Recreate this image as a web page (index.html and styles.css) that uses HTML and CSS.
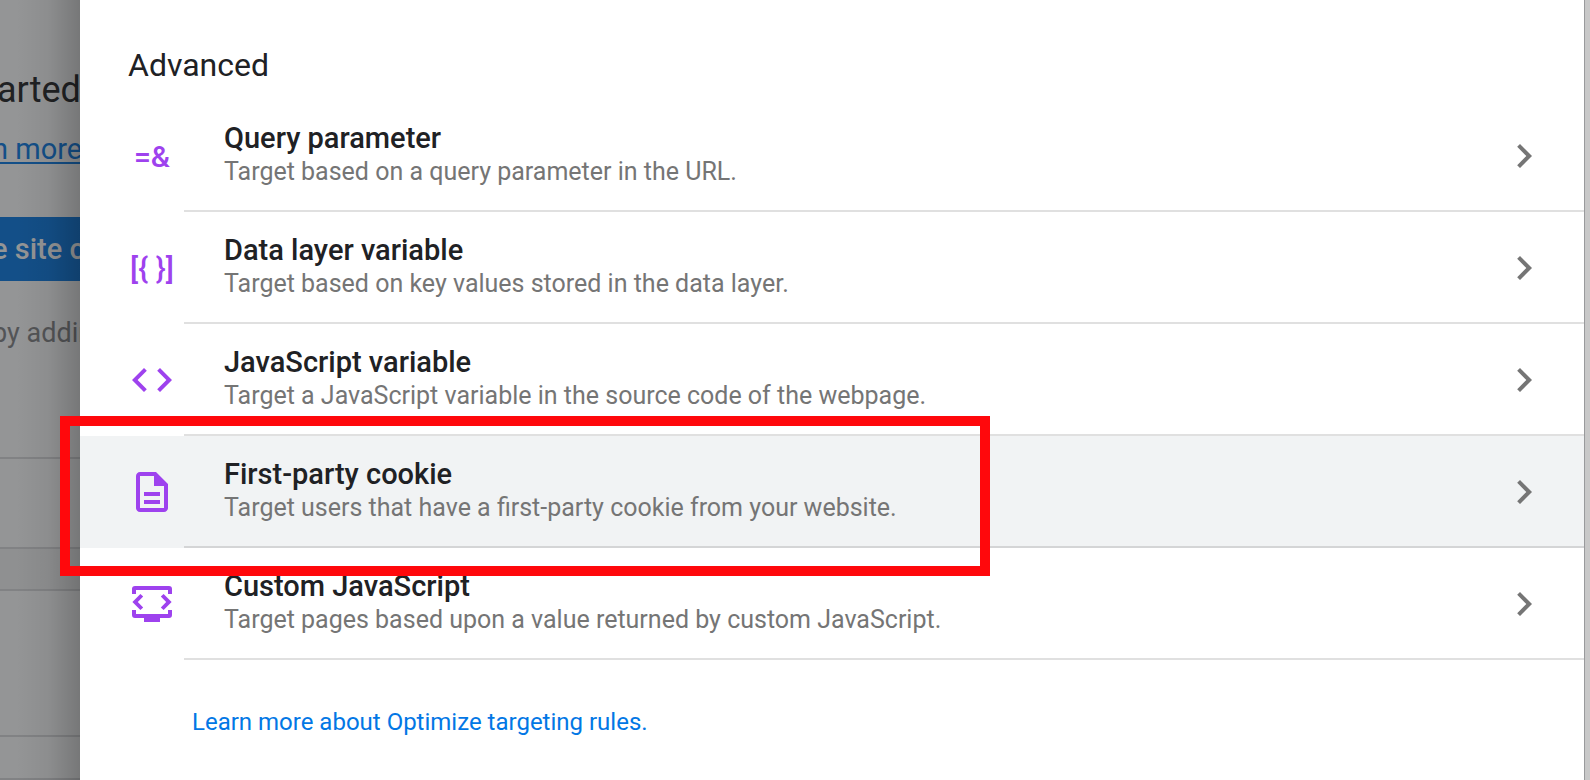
FILE: index.html
```html
<!DOCTYPE html>
<html lang="en">
<head>
<meta charset="utf-8">
<title>Advanced targeting rules</title>
<link rel="stylesheet" href="styles.css">
</head>
<body>
<div class="screen">
  <div class="backdrop">
    <h1 class="backdrop-title">arted</h1>
    <a class="backdrop-link" href="#">n more</a>
    <button class="backdrop-button" type="button">e site c</button>
    <p class="backdrop-note">by addin</p>
    <div class="backdrop-rows">
      <div class="strip strip-head"></div>
      <div class="strip strip-gap"></div>
      <div class="strip strip-body"></div>
      <div class="strip strip-foot"></div>
    </div>
  </div>

  <main class="panel">
    <h2 class="panel-title">Advanced</h2>
    <ul class="rules">
      <li class="rule">
        <button class="rule-button" type="button">
          <span class="rule-icon">=&amp;</span>
          <span class="rule-main">
            <span class="rule-text">
              <span class="rule-name">Query parameter</span>
              <span class="rule-info">Target based on a query parameter in the URL.</span>
            </span>
            <svg class="chevron" viewBox="0 0 24 24" aria-hidden="true"><path d="M10 6 8.59 7.41 13.17 12l-4.58 4.59L10 18l6-6z"/></svg>
          </span>
        </button>
      </li>
      <li class="rule">
        <button class="rule-button" type="button">
          <span class="rule-icon">[{ }]</span>
          <span class="rule-main">
            <span class="rule-text">
              <span class="rule-name">Data layer variable</span>
              <span class="rule-info">Target based on key values stored in the data layer.</span>
            </span>
            <svg class="chevron" viewBox="0 0 24 24" aria-hidden="true"><path d="M10 6 8.59 7.41 13.17 12l-4.58 4.59L10 18l6-6z"/></svg>
          </span>
        </button>
      </li>
      <li class="rule">
        <button class="rule-button" type="button">
          <span class="rule-icon"><svg class="glyph" viewBox="0 0 24 24" aria-hidden="true"><path d="M9.4 16.6 4.8 12l4.6-4.6L8 6l-6 6 6 6 1.4-1.4zm5.2 0 4.6-4.6-4.6-4.6L16 6l6 6-6 6-1.4-1.4z"/></svg></span>
          <span class="rule-main">
            <span class="rule-text">
              <span class="rule-name">JavaScript variable</span>
              <span class="rule-info">Target a JavaScript variable in the source code of the webpage.</span>
            </span>
            <svg class="chevron" viewBox="0 0 24 24" aria-hidden="true"><path d="M10 6 8.59 7.41 13.17 12l-4.58 4.59L10 18l6-6z"/></svg>
          </span>
        </button>
      </li>
      <li class="rule rule-active">
        <button class="rule-button" type="button">
          <span class="rule-icon"><svg class="glyph" viewBox="0 0 24 24" aria-hidden="true"><path d="M8 16h8v2H8zm0-4h8v2H8zm6-10H6c-1.1 0-2 .9-2 2v16c0 1.1.89 2 1.99 2H18c1.1 0 2-.9 2-2V8l-6-6zm4 18H6V4h7v5h5v11z"/></svg></span>
          <span class="rule-main">
            <span class="rule-text">
              <span class="rule-name">First-party cookie</span>
              <span class="rule-info">Target users that have a first-party cookie from your website.</span>
            </span>
            <svg class="chevron" viewBox="0 0 24 24" aria-hidden="true"><path d="M10 6 8.59 7.41 13.17 12l-4.58 4.59L10 18l6-6z"/></svg>
          </span>
        </button>
        <span class="highlight"></span>
      </li>
      <li class="rule">
        <button class="rule-button" type="button">
          <span class="rule-icon"><svg class="glyph" viewBox="0 0 24 24" aria-hidden="true"><path d="M2 7V4.500Q2 3 3.500 3h17Q22 3 22 4.500V7h-2V5H4v2zM2 15h2v2h16v-2h2v2.500q0 1.500-1.500 1.500H16v2H8v-2H3.500Q2 19 2 17.500zM6.200 7 7.600 8.300 4.900 11l2.700 2.700L6.200 15l-4-4zM17.800 7l4 4-4 4-1.400-1.300 2.700-2.700-2.700-2.700z"/></svg></span>
          <span class="rule-main">
            <span class="rule-text">
              <span class="rule-name">Custom JavaScript</span>
              <span class="rule-info">Target pages based upon a value returned by custom JavaScript.</span>
            </span>
            <svg class="chevron" viewBox="0 0 24 24" aria-hidden="true"><path d="M10 6 8.59 7.41 13.17 12l-4.58 4.59L10 18l6-6z"/></svg>
          </span>
        </button>
      </li>
    </ul>
    <a class="learn-more" href="#">Learn more about Optimize targeting rules.</a>
  </main>

  <div class="edge"></div>
</div>
</body>
</html>
```

FILE: styles.css
```css
* {
  box-sizing: border-box;
}

body {
  margin: 0;
  font-family: Roboto, "Liberation Sans", sans-serif;
  color: #202124;
}

.screen {
  display: grid;
  grid-template-columns: 80px 1fr 6px;
  min-height: 100vh;
  overflow: hidden;
}

/* Dimmed page behind the panel */
.backdrop {
  position: relative;
  display: flex;
  flex-direction: column;
  min-width: 0;
  overflow: hidden;
  padding-top: 66px;
  background: #949596;
  white-space: nowrap;
}

/* Shadow that the panel casts on the page */
.backdrop::after {
  content: "";
  position: absolute;
  inset: 0;
  background: linear-gradient(to right, rgba(0, 0, 0, 0) 20%, rgba(0, 0, 0, 0.05) 60%, rgba(0, 0, 0, 0.2) 100%);
  pointer-events: none;
}

.backdrop-title {
  margin: 0 0 0 -3px;
  font-size: 36px;
  line-height: 48px;
  font-weight: 400;
  color: #202123;
}

.backdrop-link {
  margin: 18px 0 0 -8px;
  font-size: 29px;
  line-height: 34px;
  color: #134f88;
  text-decoration-thickness: 2px;
  text-underline-offset: 3px;
}

.backdrop-button {
  height: 64px;
  margin-top: 51px;
  padding: 0;
  border: 0;
  background: #134f88;
  color: #949596;
  font: 500 29px/64px Roboto, "Liberation Sans", sans-serif;
  text-align: left;
  text-indent: -8px;
}

.backdrop-note {
  margin: 34px 0 0 -8px;
  font-size: 27px;
  line-height: 36px;
  color: #535456;
}

.backdrop-rows {
  flex: 1;
  display: flex;
  flex-direction: column;
  margin-top: 106px;
}

.strip {
  border-top: 2px solid #818284;
}

.strip-head {
  height: 90px;
}

.strip-gap {
  height: 42px;
  background: #8f9091;
}

.strip-body {
  height: 146px;
}

.strip-foot {
  flex: 1;
  border-bottom: 2px solid #818284;
}

/* Side panel */
.panel {
  position: relative;
  padding-top: 44px;
  background: #fff;
}

.panel-title {
  margin: 0;
  padding: 0 48px 14px;
  font-size: 32px;
  line-height: 42px;
  font-weight: 400;
}

.rules {
  margin: 0;
  padding: 0;
  list-style: none;
}

.rule {
  position: relative;
}

.rule-button {
  display: flex;
  width: 100%;
  height: 112px;
  padding: 0;
  border: 0;
  background: none;
  font: inherit;
  color: inherit;
  text-align: left;
}

.rule-active .rule-button {
  background: #f1f3f4;
}

.rule-icon {
  flex: none;
  display: flex;
  align-items: center;
  justify-content: center;
  width: 48px;
  height: 112px;
  margin: 0 8px 0 48px;
  color: #9e42ee;
  font-size: 30px;
  font-weight: 500;
  white-space: nowrap;
}

.glyph {
  width: 48px;
  height: 48px;
  fill: currentColor;
}

.rule-main {
  flex: 1;
  display: flex;
  align-items: center;
  height: 112px;
  padding: 2px 36px 0 40px;
  border-bottom: 2px solid #e0e0e0;
}

.rule-active .rule-main {
  border-color: #d4d5d6;
}

.rule-text {
  flex: 1;
}

.rule-name,
.rule-info {
  display: block;
}

.rule-name {
  font-size: 29px;
  line-height: 32px;
  font-weight: 500;
}

.rule-info {
  font-size: 25px;
  line-height: 36px;
  color: #757575;
}

.chevron {
  flex: none;
  width: 48px;
  height: 48px;
  fill: #757575;
}

.highlight {
  position: absolute;
  top: -20px;
  bottom: -28px;
  left: -20px;
  z-index: 1;
  width: 930px;
  border: 10px solid #ff080c;
  pointer-events: none;
}

.learn-more {
  display: inline-block;
  margin: 44px 0 0 112px;
  font-size: 24px;
  line-height: 36px;
  color: #0277e5;
  text-decoration: none;
}

.edge {
  border-left: 1px solid #999a9c;
  background: #c8c8c8;
}
```
